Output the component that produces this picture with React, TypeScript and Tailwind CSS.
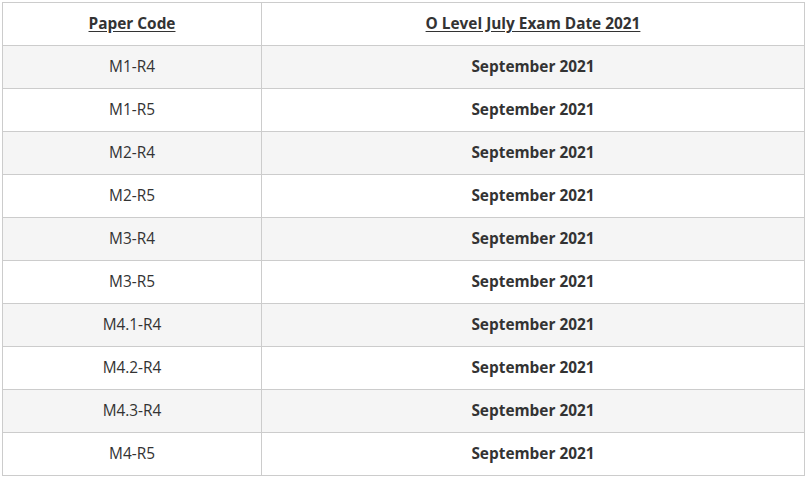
const ROWS = ["M1-R4", "M1-R5", "M2-R4", "M2-R5", "M3-R4", "M3-R5", "M4.1-R4", "M4.2-R4", "M4.3-R4", "M4-R5"]

export default function App() {
  return (
    <div className="bg-white w-[807px] h-[478px] pt-[2px] pl-[2px] font-['Open_Sans',sans-serif] text-[15.4px] leading-[20px] text-[#333]">
      <table className="w-[803px] border-collapse">
        <thead>
          <tr>
            <th className="w-[259px] h-[43px] pb-[1px] border border-[#ccc] font-bold">
              <span className="underline underline-offset-2">Paper Code</span>
            </th>
            <th className="h-[43px] pb-[1px] border border-[#ccc] font-bold">
              <span className="underline underline-offset-2">O Level July Exam Date 2021</span>
            </th>
          </tr>
        </thead>
        <tbody>
          {ROWS.map((code, i) => (
            <tr key={code} className={i % 2 === 0 ? "bg-[#f5f5f5]" : "bg-white"}>
              <td className="h-[43px] pb-[1px] border border-[#ccc] text-center">{code}</td>
              <td className="h-[43px] pb-[1px] border border-[#ccc] text-center font-bold">September 2021</td>
            </tr>
          ))}
        </tbody>
      </table>
    </div>
  )
}
